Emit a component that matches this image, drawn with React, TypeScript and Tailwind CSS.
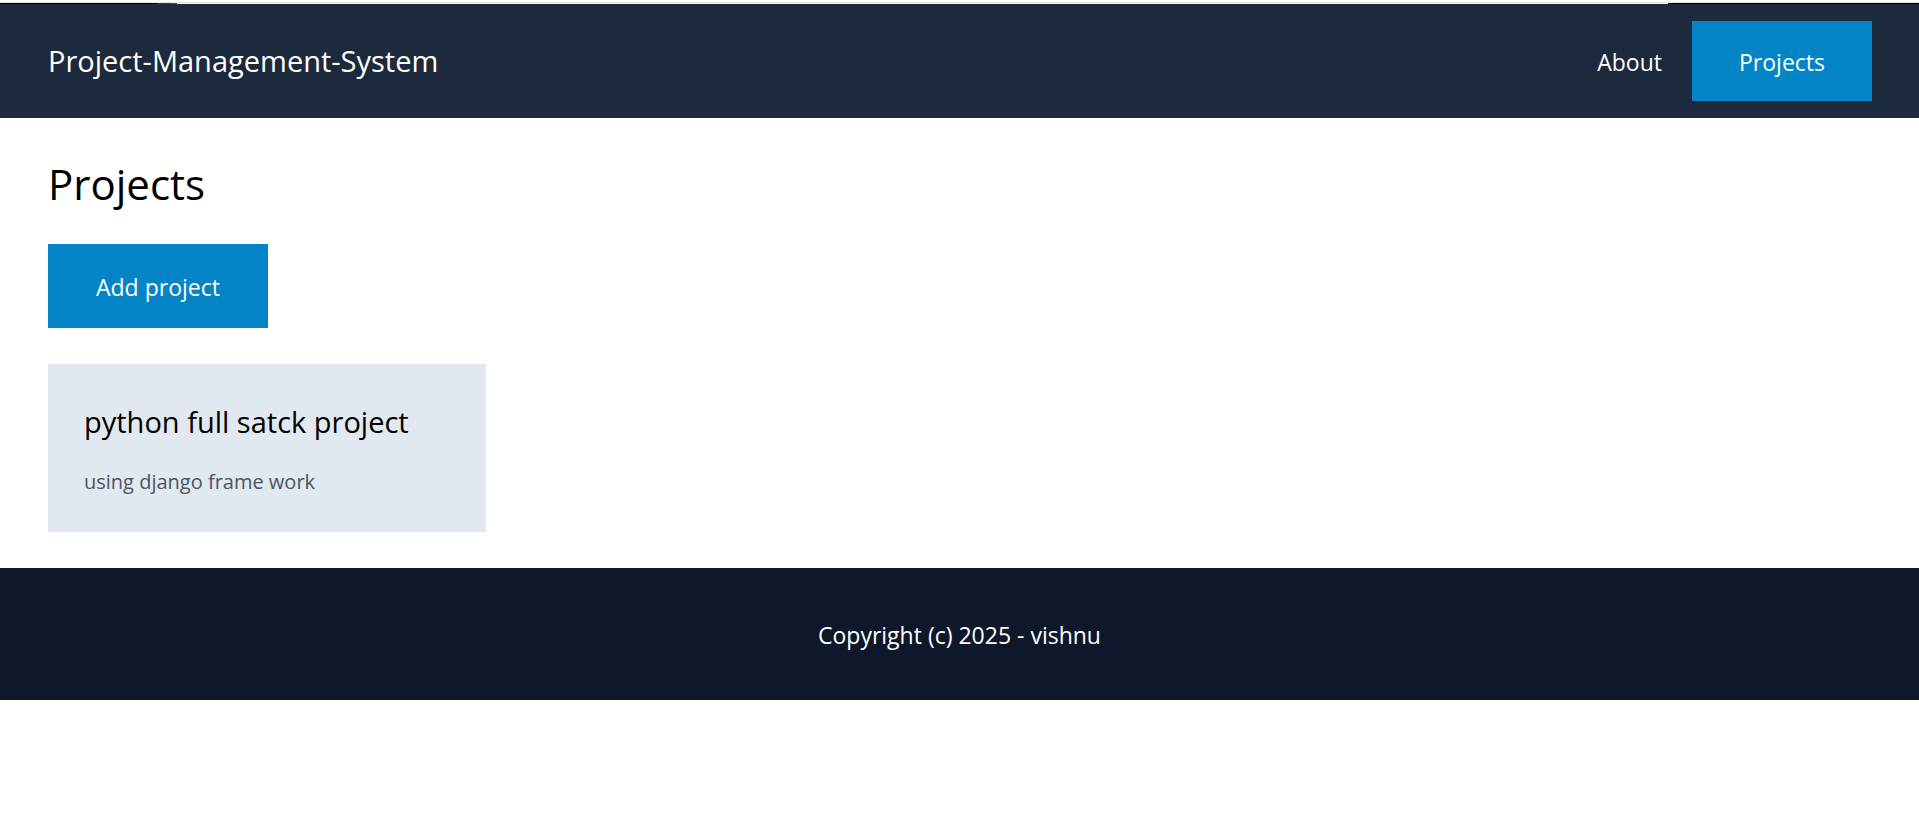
export default function App() {
  return (
    <div className="min-h-screen bg-white font-['Open_Sans','Noto_Sans',sans-serif] text-black">
      <div className="h-[3px] border-b border-[#e4e5dc] bg-white" />
      <div className="flex h-px bg-[#f4f5f2]">
        <div className="w-[8.2%] bg-black" />
        <div className="w-[0.7%] bg-[#3a3a3a]" />
        <div className="w-[0.3%] bg-[#1d5bb5]" />
        <div className="ml-auto w-[13.1%] bg-black" />
      </div>
      <header className="bg-slate-800">
        <nav className="flex items-center justify-between py-[17px] pr-[47px] pl-12 text-white">
          <a href="#home" className="text-[29px] leading-[44px]">Project-Management-System</a>
          <div className="flex items-baseline gap-[30px] text-[23px] leading-8">
            <a href="#about">About</a>
            <a href="#projects" className="bg-[#0284c7] px-[47px] pt-[25px] pb-[23px]">Projects</a>
          </div>
        </nav>
      </header>
      <main className="px-12 py-9">
        <h1 className="text-[42px] leading-[60px]">Projects</h1>
        <button type="button" className="mt-[30px] block bg-[#0284c7] px-12 pt-[25px] pb-[23px] text-[23px] leading-9 text-white">Add project</button>
        <article className="mt-9 w-full max-w-[438px] bg-slate-200 p-9">
          <h2 className="text-[29px] leading-[44px]">python full satck project</h2>
          <p className="mt-6 text-[20px] leading-7 text-[#4b5563]">using django frame work</p>
        </article>
      </main>
      <footer className="bg-slate-900 px-12 pt-[49px] pb-[47px] text-center text-[23px] leading-9 text-white">Copyright (c) 2025 - vishnu</footer>
    </div>
  );
}
